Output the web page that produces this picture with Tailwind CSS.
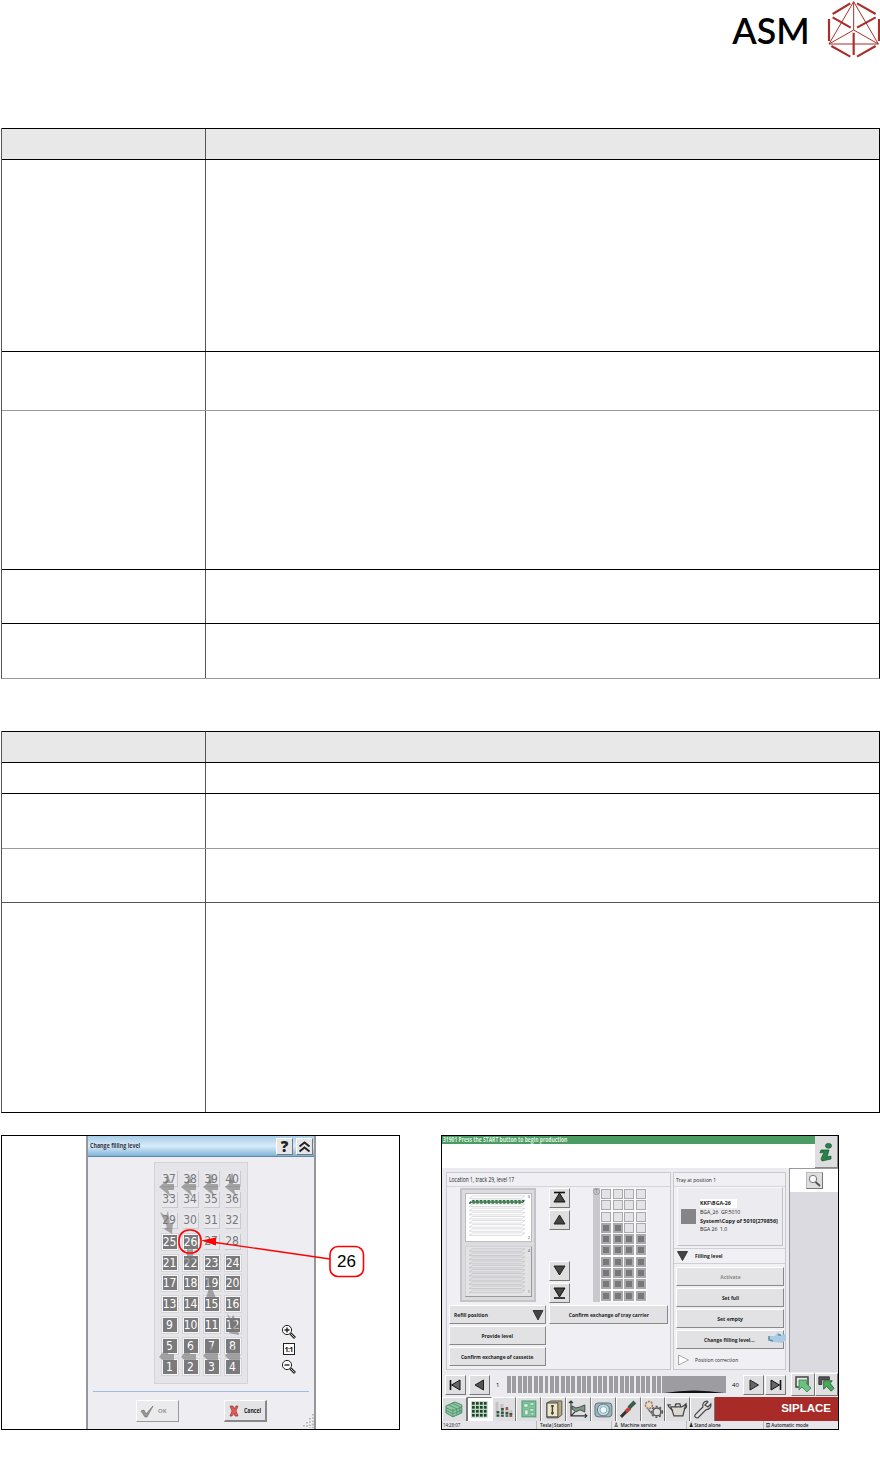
<!DOCTYPE html>
<html lang="en">
<head>
  <meta charset="UTF-8" />
  <meta name="viewport" content="width=device-width, initial-scale=1.0" />
  <title>Change filling level</title>
  <script src="https://cdn.jsdelivr.net/npm/@tailwindcss/browser@4"></script>
</head>
<body class="bg-white text-black font-['Liberation_Sans',sans-serif] w-[880px] h-[1468px] overflow-hidden">

  <!-- Logo -->
  <header class="h-[128px] flex justify-end">
    <svg class="w-[160px] h-[64px]" viewBox="0 0 480 192" fill="none" stroke="#a92f2a">
      <text x="37" y="132" font-family="Lato, sans-serif" font-size="111" font-weight="600" textLength="232" lengthAdjust="spacingAndGlyphs" fill="#000" stroke="none">ASM</text>
      <path stroke-width="3" d="M401 5L327 132H475ZM401 5V90M401 90L327 132M401 90L475 132" />
      <path stroke-width="6.500" d="M338 42L391 10M411 10L467 42M327 57V123M477 57V123M334 138L391 170M411 170L467 138M338 52L392 83M411 83L467 52M401 98V165" />
    </svg>
  </header>

  <!-- Tables -->
  <div class="ml-px w-[879px] border-x border-x-[#555] border-r-black border-b border-b-[#999]">
    <div class="h-[31px] border-t border-black bg-[#e8e8e8] flex"><div class="w-[204px] border-r border-[#555]"></div></div>
    <div class="h-[192px] border-t border-black flex"><div class="w-[204px] border-r border-[#555]"></div></div>
    <div class="h-[59px] border-t border-black flex"><div class="w-[204px] border-r border-[#555]"></div></div>
    <div class="h-[159px] border-t border-[#999] flex"><div class="w-[204px] border-r border-[#555]"></div></div>
    <div class="h-[54px] border-t border-black flex"><div class="w-[204px] border-r border-[#555]"></div></div>
    <div class="h-[55px] border-t border-black flex"><div class="w-[204px] border-r border-[#555]"></div></div>
  </div>

  <div class="mt-[52px] ml-px w-[879px] border-x border-x-[#555] border-r-black border-b border-b-black">
    <div class="h-[31px] border-t border-black bg-[#e8e8e8] flex"><div class="w-[204px] border-r border-[#555]"></div></div>
    <div class="h-[31px] border-t border-black flex"><div class="w-[204px] border-r border-[#555]"></div></div>
    <div class="h-[55px] border-t border-black flex"><div class="w-[204px] border-r border-[#555]"></div></div>
    <div class="h-[54px] border-t border-[#999] flex"><div class="w-[204px] border-r border-[#555]"></div></div>
    <div class="h-[210px] border-t border-[#555] flex"><div class="w-[204px] border-r border-[#555]"></div></div>
  </div>

  <div class="mt-[22px] ml-px flex gap-[41px]">

    <!-- Filling level dialog -->
    <div class="relative w-[399px] h-[295px] border border-black">
      <div class="ml-[84px] w-[230px] h-[293px] bg-[#eeeef2] border-x-2 border-[#96969c] flex flex-col font-['Open_Sans',sans-serif]">
        <div class="h-[21px] shrink-0 bg-linear-to-b from-[#a6cde9] via-[#d8ecf8] to-[#7fb3d8] border-b border-[#5f88a8] flex items-center pl-[2px] pr-px">
          <span class="origin-left scale-x-[.82] text-[6.500px] font-bold text-[#334]">Change filling level</span>
          <div class="ml-auto flex gap-[3px]">
            <div class="w-[17px] h-[17px] bg-[#e6e6e8] border border-white border-r-[#777] border-b-[#777] flex items-center justify-center text-[15px] leading-none font-extrabold text-[#222]">?</div>
            <div class="w-[17px] h-[17px] bg-[#e6e6e8] border border-white border-r-[#777] border-b-[#777] flex items-center justify-center">
              <svg class="w-[13px] h-[13px]" viewBox="0 0 13 13" fill="none" stroke="#222" stroke-width="2"><path d="M1.5 6.5L6.5 2.500L11.5 6.5M1.5 11.5L6.5 7.500L11.5 11.5" /></svg>
            </div>
          </div>
        </div>

        <div class="mt-[5px] ml-[66px] w-[94px] h-[222px] shrink-0 bg-[#e4e4e9] border border-[#d2d2d8] pt-[8px] pl-[6.500px]">
          <div id="pockets" class="grid grid-cols-[repeat(4,16px)] auto-rows-[16px] gap-x-[5px] gap-y-[4.9px] font-['DejaVu_Sans_Condensed','DejaVu_Sans',sans-serif]"></div>
        </div>

        <div class="mt-[7px] mx-[5px] h-px shrink-0 bg-[#98c0df]"></div>
        <div class="mt-[8px] ml-[48px] flex gap-[45px]">
          <div class="w-[43px] h-[22px] bg-[#ebebee] border border-white border-r-[#999] border-b-[#999] flex items-center gap-[4px] pl-[3px] text-[6px] font-semibold text-[#888]">
            <svg class="w-[14px] h-[13px]" viewBox="0 0 14 13"><path d="M1 6L4 5L6 9L13 1L7 12H5Z" fill="#999" stroke="#666" stroke-width=".6" /></svg>OK
          </div>
          <div class="w-[43px] h-[22px] bg-[#e4e4e6] border border-white border-r-2 border-b-2 border-r-[#888] border-b-[#888] flex items-center gap-[5px] pl-[4px] text-[6.300px] font-bold text-[#222]">
            <svg class="w-[10px] h-[12px] shrink-0" viewBox="0 0 10 12"><path d="M1 1H4L5 4L7 1H9L7 6L9 11H6L5 8L3 11H1L3 6Z" fill="#e45b57" stroke="#8c3330" stroke-width=".7" /></svg><span class="origin-left scale-x-[.82]">Cancel</span>
          </div>
        </div>
      </div>

      <!-- Path arrows, zoom tools and callout over the dialog -->
      <svg class="absolute left-0 top-0 w-[397px] h-[293px]" viewBox="2 1136 397 293">
        <g fill="#777" fill-opacity=".62">
          <path id="left-arrow" d="M159 1187L167 1180V1184H174V1190H168L171 1197L164 1191Z" />
          <use href="#left-arrow" x="22" /><use href="#left-arrow" x="44" /><use href="#left-arrow" x="66" />
          <path d="M168 1175L171 1183H165ZM190 1175L192 1183H187ZM211 1173L214 1183H208ZM232 1172L235 1183H229Z" />
          <path d="M159 1357L168 1346V1354H174V1361H166V1363ZM181 1357L190 1346V1354H196V1361H188V1363ZM203 1356L212 1345V1353H218V1360H210V1362ZM225 1356L234 1345V1353H240V1360H232V1362Z" />
          <path d="M160 1212L166 1216L168 1211L170 1224L173 1222L172 1234L164 1229L167 1227Z" />
          <path d="M187 1246L190 1250L193 1246V1257H197L190 1268L184 1258H187ZM207 1278H213L211 1286L216 1298H206L209 1288ZM227 1313L231 1319L233 1315L236 1320L239 1335L229 1333L231 1328Z" />
        </g>
        <g fill="#fff" stroke="#222">
          <circle cx="287" cy="1330" r="4.6" /><path d="M284.5 1330H289.5M287 1327.5V1332.5" stroke-width="1.4" />
          <path d="M290.5 1333.5L295 1338" stroke-width="2.8" /><path d="M291 1334L294.5 1337.5" stroke="#ccc" />
          <circle cx="287" cy="1365" r="4.6" /><path d="M284.5 1365H289.5" stroke-width="1.4" />
          <path d="M290.5 1368.5L295 1373" stroke-width="2.8" /><path d="M291 1369L294.5 1372.5" stroke="#ccc" />
          <rect x="283.5" y="1343.5" width="11" height="11" />
        </g>
        <text x="284.7" y="1351.500" font-family="Open Sans, sans-serif" font-size="6.5" font-weight="700" textLength="8.6">1:1</text>
        <path d="M201 1240.5L216 1237.500V1245.500Z" fill="#f00" />
        <path d="M212 1242L330 1259" stroke="#f00" stroke-width="1.4" />
        <rect x="179" y="1230" width="22" height="23" rx="10" fill="none" stroke="#f00" stroke-width="1.6" />
        <rect x="330" y="1246.500" width="33.500" height="30" rx="8" fill="#fff" stroke="#f00" stroke-width="1.6" />
        <text x="337" y="1267" font-family="Liberation Sans, sans-serif" font-size="17">26</text>
        <path d="M313 1414V1428M310 1418V1428M307 1422V1428M304 1425V1428" stroke="#aaa" stroke-width="1.6" stroke-dasharray="1.6 1.6" />
      </svg>
    </div>

    <!-- Station software -->
    <div class="w-[398px] h-[295px] border border-black bg-[#ececf0] flex flex-col overflow-hidden font-['Open_Sans',sans-serif] text-[6px] leading-none whitespace-nowrap">
      <div class="h-[32px] shrink-0 flex bg-white">
        <div class="w-[373px]">
          <div class="h-[8px] bg-[#4b9c62] text-[#e0f2e3] font-bold text-[6.300px] leading-[7px] pl-px"><div class="origin-left scale-x-[.795]">31901 Press the START button to begin production</div></div>
        </div>
        <div class="flex-1 bg-[#dedee1] border-r border-b border-[#888] flex items-center justify-center">
          <svg class="w-[16px] h-[20px]" viewBox="0 0 16 20"><path d="M3 8H11L9 15L13 14V17L4 19L3 17L6 10L2 11Z" fill="#24854b" stroke="#164f2d" stroke-width=".7" /><ellipse cx="10.500" cy="3.800" rx="3" ry="2.400" fill="#24854b" stroke="#164f2d" stroke-width=".7" /></svg>
        </div>
      </div>

      <div class="h-[204px] shrink-0 flex">
        <!-- Location -->
        <div class="mt-[4px] ml-[4px] w-[225px] h-[198px] border border-[#c9c9cf] bg-[#f0f0f4] flex flex-col">
          <div class="h-[14px] shrink-0 border-b border-[#d5d5da] pl-[2px] text-[6.300px] leading-[14px] text-[#222]"><div class="origin-left scale-x-[.79]">Location 1, track 29, level 17</div></div>
          <div class="mt-px pl-[13px] h-[115px] shrink-0 flex">
            <div class="w-[76px] h-[114px] border-2 border-[#c3c3c8] bg-[#dcdce0] p-[3px] flex flex-col gap-[4px]">
              <svg class="w-[67px] h-[49px] border border-[#bbb] bg-white" viewBox="0 0 67 49" fill="none" stroke="#c6c6ca" stroke-width=".6">
                <g id="upper-trays"></g>
                <path d="M3 9.500L6 7H61L58 9.500Z" fill="#4fa169" stroke="#1f3a28" stroke-width="1" stroke-dasharray="2.400 1.600" />
                <text x="64" y="4" font-size="4" fill="#333" stroke="none">3</text><text x="64" y="47" font-size="4" fill="#333" stroke="none">2</text>
              </svg>
              <svg class="w-[67px] h-[51px] border border-[#cfcfd4] border-r-[#999] border-b-[#999] bg-[#e3e3e6]" viewBox="0 0 67 51" fill="none" stroke="#b8b8bd" stroke-width=".6">
                <g id="lower-trays"></g>
                <text x="64" y="5" font-size="4" fill="#333" stroke="none">4</text><text x="64" y="48" font-size="4" fill="#333" stroke="none">1</text>
              </svg>
            </div>
            <div class="ml-[13px] w-[21px] flex flex-col gap-[2px]">
              <div class="h-[20px] bg-[#dfdfe2] border border-white border-r-[#777] border-b-[#777]"><svg viewBox="0 0 19 18"><path d="M4 3.500H15" stroke="#111" stroke-width="1.6" /><path d="M9.500 4L15 13H4Z" fill="#444" stroke="#111" /></svg></div>
              <div class="h-[20px] bg-[#dfdfe2] border border-white border-r-[#777] border-b-[#777]"><svg viewBox="0 0 19 18"><path d="M9.500 4L15 13H4Z" fill="#444" stroke="#222" /></svg></div>
              <div class="mt-[29px] h-[20px] bg-[#dfdfe2] border border-white border-r-[#777] border-b-[#777]"><svg viewBox="0 0 19 18"><path d="M4 4H15L9.500 13Z" fill="#444" stroke="#222" /></svg></div>
              <div class="h-[20px] bg-[#dfdfe2] border border-white border-r-[#777] border-b-[#777]"><svg viewBox="0 0 19 18"><path d="M4 4H15L9.500 13Z" fill="#444" stroke="#111" /><path d="M4 14H15" stroke="#111" stroke-width="1.6" /></svg></div>
            </div>
            <div class="ml-[23px] h-[114px] w-[7px] bg-[#c9c9cd] text-[5px] text-center text-[#555]"><div class="w-[7px] h-[7px] rounded-full border border-[#999] leading-[5px]">1</div></div>
            <div id="tray" class="h-[114px] bg-[#fafafb] px-px pt-px grid grid-cols-[repeat(4,10px)] auto-rows-[10px] gap-x-[1.5px] gap-y-[1.3px]"></div>
          </div>
          <div class="ml-[2px] mt-[2px] flex gap-[3px] font-bold text-[#222]">
            <div class="w-[97px] flex flex-col gap-[2px]">
              <div class="h-[19px] bg-[#e2e2e5] border border-white border-r-[#888] border-b-[#888] flex items-center justify-between pl-[4px] pr-px"><span class="origin-left scale-x-[.82]">Refill position</span>
                <svg class="w-[12px] h-[12px]" viewBox="0 0 12 12"><path d="M1 1.500H11L6 11Z" fill="#444" stroke="#222" stroke-width=".8" /></svg>
              </div>
              <div class="h-[19px] bg-[#e2e2e5] border border-white border-r-[#888] border-b-[#888] flex items-center justify-center"><span class="scale-x-[.82]">Provide level</span></div>
              <div class="h-[19px] bg-[#e2e2e5] border border-white border-r-[#888] border-b-[#888] flex items-center justify-center"><span class="scale-x-[.82]">Confirm exchange of cassette</span></div>
            </div>
            <div class="w-[119px] h-[19px] bg-[#e2e2e5] border border-white border-r-[#888] border-b-[#888] flex items-center justify-center"><span class="scale-x-[.82]">Confirm exchange of tray carrier</span></div>
          </div>
        </div>

        <!-- Tray at position -->
        <div class="mt-[4px] ml-[2px] w-[113px] h-[198px] border border-[#c9c9cf] bg-[#f0f0f4] flex flex-col text-[#222]">
          <div class="h-[14px] shrink-0 border-b border-[#d5d5da] pl-[2px] leading-[14px]"><div class="origin-left scale-x-[.83]">Tray at position 1</div></div>
          <div class="ml-[3px] w-[106px] h-[59px] shrink-0 border border-[#fafafa] border-r-[#c0c0c5] border-b-[#c0c0c5] bg-[#ececf0] flex items-center pl-[3px] gap-[4px]">
            <div class="w-[15px] h-[15px] bg-[#858588] shrink-0"></div>
            <div class="flex flex-col leading-[8.800px]">
              <b class="origin-left scale-x-[.88] bg-white w-[42px]">KKF\BGA-26</b>
              <span class="origin-left scale-x-[.85]">BGA_26 &nbsp;GF:5010</span>
              <b class="origin-left scale-x-[.9]">System\Copy of 5010[279856]</b>
              <span class="origin-left scale-x-[.85]">BGA 26 &nbsp;1.0</span>
            </div>
          </div>
          <div class="mt-[2px] h-[16px] shrink-0 border-y border-[#cfcfd4] flex items-center pl-[3px] gap-[7px] font-bold">
            <svg class="w-[11px] h-[10px]" viewBox="0 0 11 10"><path d="M.5.5H10.500L5.500 9.500Z" fill="#444" stroke="#222" stroke-width=".8" /></svg><span class="origin-left scale-x-[.82]">Filling level</span>
          </div>
          <div class="mt-[3px] ml-[2px] w-[108px] flex flex-col gap-[2px] font-bold">
            <div class="h-[19px] bg-[#e4e4e7] border border-white border-r-[#888] border-b-[#888] flex items-center justify-center text-[#888]"><span class="scale-x-[.82]">Activate</span></div>
            <div class="h-[19px] bg-[#e2e2e5] border border-white border-r-[#888] border-b-[#888] flex items-center justify-center"><span class="scale-x-[.82]">Set full</span></div>
            <div class="h-[19px] bg-[#e2e2e5] border border-white border-r-[#888] border-b-[#888] flex items-center justify-center"><span class="scale-x-[.85]">Set empty</span></div>
            <div class="relative h-[19px] bg-[#e2e2e5] border border-white border-r-[#888] border-b-[#888] flex items-center pl-[27px]"><span class="origin-left scale-x-[.82]">Change filling level...</span>
              <svg class="absolute left-[91px] top-0 w-[20px] h-[13px]" viewBox="0 0 20 13"><path d="M1 5H7L10 1L13 4L18 3V9L14 12L5 11L1 9Z" fill="#a9cce2" /><path d="M1 5V9L5 10M10 4H13" stroke="#5a8ba8" stroke-width="1.500" fill="none" /></svg>
            </div>
          </div>
          <div class="mt-[5px] flex items-center pl-[4px] gap-[6px]">
            <svg class="w-[11px] h-[12px]" viewBox="0 0 11 12"><path d="M.5 1L10.500 6L.5 11Z" fill="#fff" stroke="#aaa" /></svg><span class="origin-left scale-x-[.82]">Position correction</span>
          </div>
        </div>

        <div class="ml-auto w-[49px] bg-[#dadae0] border-l border-t border-[#999]">
          <div class="h-[23px] bg-white flex items-center justify-center">
            <div class="w-[17px] h-[17px] bg-[#dedee0] border border-[#bbb] border-r-[#777] border-b-[#777]">
              <svg viewBox="0 0 15 15"><path d="M8 8.500L13 13" stroke="#555" stroke-width="2" /><circle cx="6" cy="6" r="3.700" fill="#f4f8fa" stroke="#777" /></svg>
            </div>
          </div>
        </div>
      </div>

      <!-- Level navigation -->
      <div class="h-[25px] shrink-0 flex items-center">
        <div class="ml-[3px] w-[21px] h-[20px] bg-[#dfdfe2] border border-white border-r-[#777] border-b-[#777]"><svg viewBox="0 0 19 18"><path d="M4.500 4V14" stroke="#111" stroke-width="1.600" /><path d="M14 4V14L5.500 9Z" fill="#666" stroke="#111" /></svg></div>
        <div class="ml-[3px] w-[21px] h-[20px] bg-[#dfdfe2] border border-white border-r-[#777] border-b-[#777]"><svg viewBox="0 0 19 18"><path d="M13.500 4V14L5 9Z" fill="#555" stroke="#222" /></svg></div>
        <span class="ml-[6px] w-[11px]">1</span>
        <div id="levels" class="w-[155px] h-[17px] flex gap-[1.400px] pr-px"></div>
        <svg class="w-[64px] h-[17px] bg-[#9c9ca1]" viewBox="0 0 64 17"><path d="M2 17Q32 12 62 17Z" fill="#111" /></svg>
        <span class="ml-[6px] w-[11px]">40</span>
        <div class="w-[21px] h-[20px] bg-[#dfdfe2] border border-white border-r-[#777] border-b-[#777]"><svg viewBox="0 0 19 18"><path d="M6 4V14L14.500 9Z" fill="#666" stroke="#222" /></svg></div>
        <div class="ml-px w-[21px] h-[20px] bg-[#dfdfe2] border border-white border-r-[#777] border-b-[#777]"><svg viewBox="0 0 19 18"><path d="M5 4V14L13.500 9Z" fill="#666" stroke="#111" /><path d="M14.500 4V14" stroke="#111" stroke-width="1.600" /></svg></div>
        <div class="ml-auto flex">
          <div class="w-[24px] h-[23px] bg-[#dfdfe2] border border-white border-r-[#777] border-b-[#777]"><svg viewBox="0 0 22 21"><rect x="4" y="3" width="12" height="10" fill="#e8e8ea" stroke="#444" stroke-width="1.500" /><path d="M7 6H16L14 9L19 14L15 18L10 13L7 16Z" fill="#6cc080" stroke="#3b7d50" stroke-width=".8" /></svg></div>
          <div class="w-[23px] h-[23px] bg-[#dfdfe2] border border-white border-r-[#777] border-b-[#777]"><svg viewBox="0 0 22 21"><path d="M3 11V3H14V6H6V11Z" fill="#555" stroke="#333" /><path d="M8 7H17L15 10L19 15L16 18L11 13L8 16Z" fill="#43ab59" stroke="#23552f" stroke-width=".8" /></svg></div>
        </div>
      </div>

      <!-- Toolbar -->
      <div class="h-[24px] shrink-0 flex">
        <div id="tools" class="w-[273px] grid grid-cols-11"></div>
        <div class="flex-1 bg-[#a82b28] flex items-center justify-end pr-[7px] text-white font-bold font-['Liberation_Sans',sans-serif] text-[11.500px]">SIPLACE</div>
      </div>

      <!-- Status bar -->
      <div class="h-[8px] shrink-0 flex text-[5.800px] leading-[8px] text-[#222] bg-[#e6e6ea]">
        <div class="w-[94px] pl-px"><div class="origin-left scale-x-[.75]">14:28:07</div></div>
        <div class="w-[75px] pl-[3px] font-semibold border-l border-[#bbb]"><div class="origin-left scale-x-[.8]">Tesla|Station1</div></div>
        <div class="w-[75px] pl-[2px] font-semibold border-l border-[#bbb]"><div class="origin-left scale-x-[.8]">♙ &nbsp;Machine service</div></div>
        <div class="w-[77px] pl-[2px] font-semibold border-l border-[#bbb]"><div class="origin-left scale-x-[.8]">♟ Stand alone</div></div>
        <div class="flex-1 pl-[2px] font-semibold border-l border-[#bbb]"><div class="origin-left scale-x-[.8]">⊡ Automatic mode</div></div>
      </div>
    </div>
  </div>

  <script>
    // Pockets run bottom to top, four per row; 26 and below are filled
    const pockets = document.getElementById("pockets");
    for (let row = 9; row >= 0; row--) {
      for (let col = 1; col <= 4; col++) {
        const n = row * 4 + col;
        const cell = document.createElement("div");
        cell.className = n <= 26
          ? "bg-[#7a7a7d] text-white border border-[#f6f6f6] outline outline-[#d4d4d9] flex items-center justify-center text-[12px] leading-none"
          : "bg-[#e9e9ed] text-[#77777a] border-r border-b border-[#c8c8ce] flex items-center justify-center text-[12px] leading-none";
        cell.textContent = n;
        pockets.appendChild(cell);
      }
    }

    const tray = document.getElementById("tray");
    for (let i = 0; i < 40; i++) {
      const cell = document.createElement("div");
      const filled = i > 15 || i === 12 || i === 13;
      cell.className = filled ? "bg-[#78787b] border border-[#a9a9ae] outline -outline-offset-2 outline-[#a9a9ae]" : "bg-[#e4e4e8] border border-[#a9a9ae]";
      tray.appendChild(cell);
    }

    function trayLines(id, count) {
      let html = "";
      for (let i = 0; i < count; i++) {
        const y = 4.5 + i * 4.3;
        html += `<path d="M3 ${y}L6.5 ${y - 2.6}H61L57.5 ${y}Z" />`;
      }
      document.getElementById(id).innerHTML = html;
    }
    trayLines("upper-trays", 10);
    trayLines("lower-trays", 11);

    const levels = document.getElementById("levels");
    for (let i = 0; i < 29; i++) {
      const bar = document.createElement("div");
      bar.className = "flex-1 bg-[#9c9ca1]";
      levels.appendChild(bar);
    }

    const dots = (color) => {
      let html = "";
      for (let y = 0; y < 4; y++) for (let x = 0; x < 4; x++) html += `<rect x="${4 + x * 4}" y="${4 + y * 4}" width="2.8" height="2.8" fill="${color}" />`;
      return html;
    };
    const icons = [
      `<path d="M3 8L12 4L19 7V15L10 19L3 15Z" fill="#8fc5a3" stroke="#4a8e66" /><path d="M3 10L10 13L19 9M3 12.500L10 16L19 12M10 11V19M6 7L14 11V17M9 5L17 9V16" stroke="#4a8e66" fill="none" stroke-width=".8" />`,
      `<rect x="3" y="3" width="17" height="17" fill="#c9e0cc" />` + dots("#20442e"),
      `<path d="M4 4V19M9 6V19M14 10V19M18 12V19" stroke="#c3c3c3" stroke-width="3" /><path d="M5 13V19M9.500 10V19M14 14V19M18 15V19" stroke="#345641" stroke-width="2.800" stroke-dasharray="2.500 1" /><path d="M14 9V12M18 17V19" stroke="#a65349" stroke-width="2.500" />`,
      `<rect x="5" y="3" width="14" height="16" fill="#7fc39b" stroke="#4d9870" /><path d="M7 6H11V9H7ZM13 5H17V7H13ZM8 12H11V17H8ZM13 11H17V13H13ZM14 15H17V17H14Z" fill="#eaf7ee" stroke="#4d9870" stroke-width=".5" />`,
      `<path d="M5 5L9 3H20V17L16 20H5Z" fill="#b9ab80" stroke="#555" /><rect x="5" y="5" width="11" height="14" fill="#efe7c8" stroke="#444" /><path d="M10.500 7V17M9 8H12M9 15H12" stroke="#444" stroke-width="1.500" />`,
      `<path d="M4 3V18H20M4 18L8 14M2 5L4 3L6 5M18 16L20 18L18 20" fill="none" stroke="#333" stroke-width="1.200" /><path d="M5 8L9 10L13 9L18 7V14L13 12L9 14L5 11Z" fill="#7a9a82" stroke="#333" stroke-width=".8" />`,
      `<rect x="3" y="5" width="17" height="14" rx="3" fill="#9fb6bf" stroke="#5c737c" /><circle cx="11.500" cy="12" r="6" fill="#c9e0e8" stroke="#5c737c" /><circle cx="11.500" cy="12" r="3.500" fill="#eaf7fb" stroke="#86a8b5" />`,
      `<path d="M4 19L11 12" stroke="#333" stroke-width="3" /><path d="M9 14L13 10" stroke="#bf4338" stroke-width="4" /><path d="M12 10L18 4" stroke="#385f48" stroke-width="4" />`,
      `<circle cx="7" cy="7" r="3.500" fill="#ecd7c2" stroke="#94765f" stroke-dasharray="2 1" stroke-width="1.500" /><circle cx="15" cy="14" r="4" fill="#ddd" stroke="#555" stroke-width="1.500" /><circle cx="15" cy="14" r="5.500" fill="none" stroke="#555" stroke-width="1.500" stroke-dasharray="2 2" /><path d="M6 11L11 17" stroke="#777" stroke-width="1.500" />`,
      `<path d="M5 9H16L20 6L17 18H8Z" fill="#ddd8cf" stroke="#444" stroke-width="1.200" /><path d="M7 13L3 9L2 7H5M9 9L10 6H14L15 9M18 11Q22 10 20 6" fill="none" stroke="#444" stroke-width="1.300" />`,
      `<path d="M4 17L12 9Q11 4 16 3L17 4L14 7L17 9L20 6Q21 11 15 12L7 20Q3 20 4 17Z" fill="#e0e0e3" stroke="#444" stroke-width="1.200" />`,
    ];
    icons.forEach((icon, i) => {
      const button = document.createElement("div");
      button.className = i === 1 ? "bg-white border border-[#777] border-r-white" : "bg-[#dfdfe2] border border-white border-r-[#777] border-b-[#777]";
      button.innerHTML = `<svg class="w-full h-full" viewBox="0 0 23 23">${icon}</svg>`;
      document.getElementById("tools").appendChild(button);
    });
  </script>

</body>
</html>
